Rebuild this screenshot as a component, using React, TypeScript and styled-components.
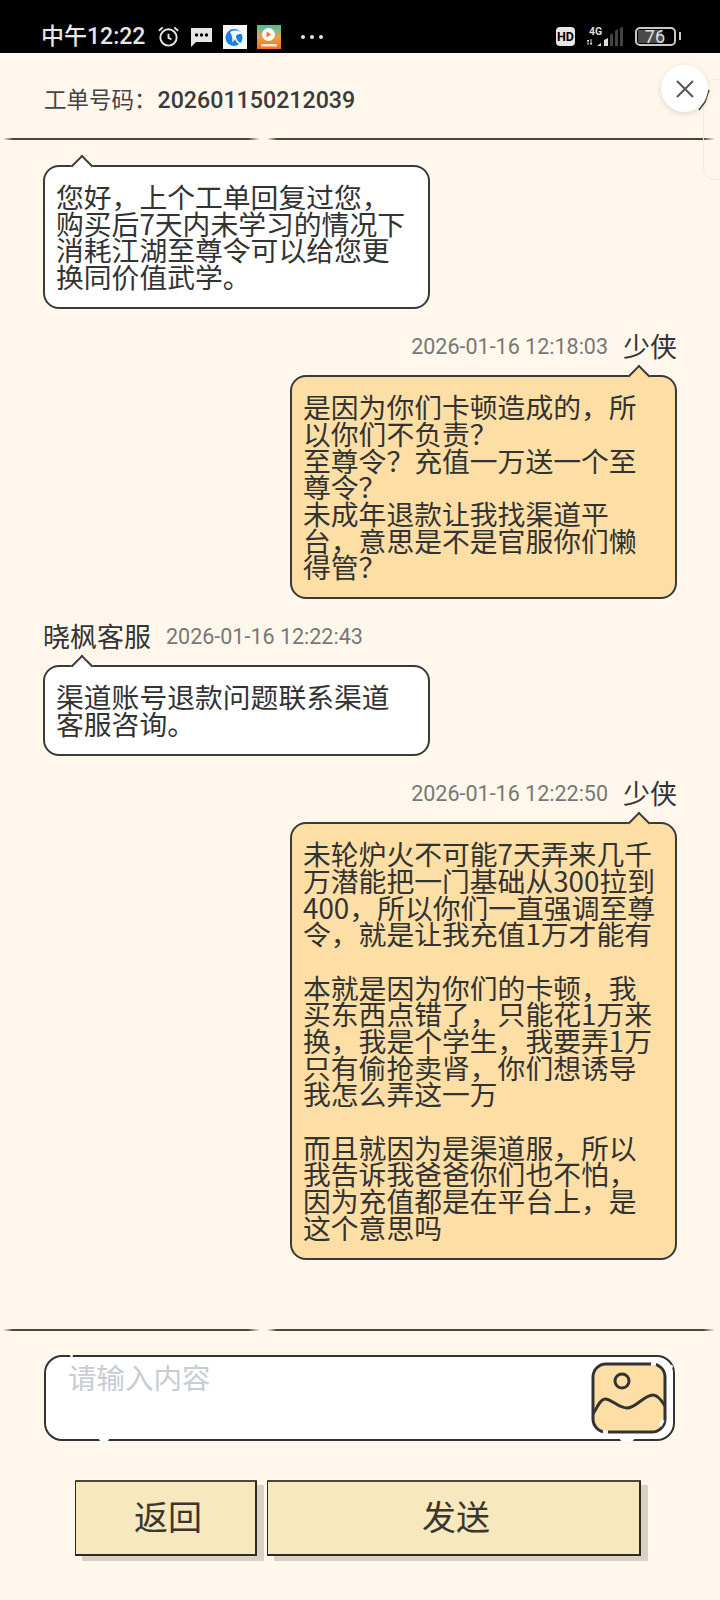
import styled, { createGlobalStyle } from 'styled-components';

const cjk = `"Noto Sans CJK SC", "Noto Sans", sans-serif`;
const latin = `Roboto, "Noto Sans CJK SC", sans-serif`;

const GlobalStyle = createGlobalStyle`
	html, body {
		margin: 0;
		padding: 0;
		background: #fff7ec;
	}
	* {
		box-sizing: border-box;
	}
`;

const Page = styled.div`
	position: relative;
	width: 720px;
	height: 1600px;
	overflow: hidden;
	background: #fff7ec;
	font-family: ${ cjk };
	color: #333;
`;

const StatusBar = styled.div`
	height: 53px;
	background: #000;
	display: flex;
	align-items: center;
	padding: 20px 0 0 41px;
	color: #e6e6e6;
`;

const Clock = styled.span`
	font-family: ${ latin };
	font-size: 23px;
	font-weight: 500;
	line-height: 1;
	width: 116px;
`;

const StatusIcons = styled.div`
	display: flex;
	align-items: center;
	gap: 10px;
`;

const StatusRight = styled.div`
	margin-left: auto;
	margin-right: 44px;
	display: flex;
	align-items: center;
	gap: 11px;
`;

const HdBadge = styled.span`
	width: 19px;
	height: 19px;
	background: #e6e6e6;
	color: #000;
	border-radius: 4px;
	font-family: ${ latin };
	font-size: 12.5px;
	font-weight: 700;
	line-height: 19px;
	text-align: center;
`;

const Battery = styled.span`
	width: 41px;
	height: 19px;
	border: 2px solid #c9c9c9;
	border-radius: 5px;
	display: block;
	position: relative;
	font-family: ${ latin };
	font-size: 18px;
	line-height: 16px;
	text-align: right;
	padding-right: 9px;
	color: #e0e0e0;

	&::before {
		content: '';
		position: absolute;
		left: 1px;
		top: 1px;
		bottom: 1px;
		width: 24px;
		background: #4a4a4a;
		z-index: 0;
	}

	&::after {
		content: '';
		position: absolute;
		right: -7px;
		top: 3px;
		width: 2px;
		height: 8px;
		background: #c9c9c9;
	}
`;

const BatteryLevel = styled.span`
	position: relative;
	z-index: 1;
`;

const Header = styled.div`
	height: 85px;
	padding: 5px 44px 0;
	display: flex;
	align-items: center;
	font-size: 22.5px;
	color: #444;
`;

const OrderNo = styled.span`
	margin: 3px 0 0 1px;
	font-family: ${ latin };
	font-size: 23.2px;
	font-weight: 500;
	color: #3a3a3a;
`;

const Divider = styled.div`
	display: flex;
	gap: 7px;
	padding: 0 5px 0 3px;
	height: 2px;
`;

const Stroke = styled.i<{ $grow: number }>`
	flex: ${ p => p.$grow };
	height: 2px;
	display: block;
	background: linear-gradient(90deg, #fff7ec 0, #4b463e 10px, #4b463e calc(100% - 12px), #fff7ec 100%);
`;

const Messages = styled.div`
	height: 1189px;
	padding: 25px 43px 0;
	display: flex;
	flex-direction: column;
`;

const Message = styled.div<{ $mine?: boolean }>`
	display: flex;
	flex-direction: column;
	align-items: ${ p => (p.$mine ? 'flex-end' : 'flex-start') };
	margin-bottom: 18px;
`;

const Meta = styled.div`
	height: 37px;
	margin-bottom: 11px;
	display: flex;
	align-items: center;
	gap: 15px;
`;

const Name = styled.span`
	font-size: 27px;
	color: #333;
`;

const Time = styled.span`
	font-family: ${ latin };
	font-size: 21.5px;
	color: #777;
	margin-top: 2px;
`;

const Bubble = styled.div<{ $mine?: boolean }>`
	position: relative;
	width: 387px;
	padding: 16px 11px 17.5px;
	border: 2px solid #3a3a3a;
	border-radius: 16px;
	background: ${ p => (p.$mine ? '#fddfa6' : '#fff') };
	font-size: 27.8px;
	line-height: 26.67px;
	color: #333;
	white-space: pre-line;

	&::before {
		content: '';
		position: absolute;
		top: -9px;
		${ p => (p.$mine ? 'right: 28px;' : 'left: 29px;') }
		width: 14px;
		height: 14px;
		background: ${ p => (p.$mine ? '#fddfa6' : '#fff') };
		border-top: 2px solid #3a3a3a;
		border-left: 2px solid #3a3a3a;
		transform: rotate(45deg);
	}
`;

const InputBox = styled.div`
	position: relative;
	margin: 24px 45px 0 44px;
	height: 86px;
	border: 2.5px solid #333;
	border-radius: 18px;
	background: #fff;
	display: flex;
	align-items: center;
	padding: 0 6px 0 22px;
`;

const Notch = styled.i<{ $left: number; $top: number; $width: number; $height: number }>`
	position: absolute;
	left: ${ p => p.$left }px;
	top: ${ p => p.$top }px;
	width: ${ p => p.$width }px;
	height: ${ p => p.$height }px;
	background: #fff;
	border-radius: 2px;
`;

const Field = styled.textarea`
	flex: 1;
	height: 100%;
	border: 0;
	outline: 0;
	resize: none;
	background: transparent;
	padding: 0;
	font-family: ${ cjk };
	font-size: 28.5px;
	line-height: 40px;

	&::placeholder {
		color: #c8ccd4;
	}
`;

const ImageButton = styled.button`
	width: 76px;
	height: 72px;
	padding: 0;
	border: 0;
	background: none;
	display: block;
`;

const Actions = styled.div`
	margin-top: 39px;
	padding: 0 0 0 75px;
	display: flex;
	gap: 10px;
`;

const ActionButton = styled.button<{ $width: number }>`
	width: ${ p => p.$width }px;
	height: 76px;
	border: 2px solid #2c2a24;
	border-left-width: 1.5px;
	border-bottom-width: 2.5px;
	border-top-color: #4c473a;
	border-radius: 1px;
	background: #f8e8bd;
	box-shadow: 7px 5px 0 #d9d1c4;
	font-family: ${ cjk };
	font-size: 34px;
	color: #3a3630;
	padding: 0 0 6px 5px;
`;

const CloseButton = styled.button`
	position: absolute;
	left: 661px;
	top: 65px;
	width: 47px;
	height: 47px;
	border: 0;
	border-radius: 50%;
	background: #fff;
	box-shadow: 0 2px 6px rgba(0, 0, 0, 0.12);
	padding: 0;
	display: flex;
	align-items: center;
	justify-content: center;
`;

const SidePanel = styled.div`
	position: absolute;
	left: 703px;
	top: 79px;
	width: 40px;
	height: 101px;
	border: 1px solid #f1eadf;
	border-radius: 12px;
`;

const SideMark = styled.svg`
	position: absolute;
	left: 695px;
	top: 88px;
`;

const messages = [
	{
		text: '您好，上个工单回复过您，\n购买后7天内未学习的情况下\n消耗江湖至尊令可以给您更\n换同价值武学。',
	},
	{
		mine: true,
		name: '少侠',
		time: '2026-01-16 12:18:03',
		text: '是因为你们卡顿造成的，所\n以你们不负责？\n至尊令？充值一万送一个至\n尊令？\n未成年退款让我找渠道平\n台，意思是不是官服你们懒\n得管？',
	},
	{
		name: '晓枫客服',
		time: '2026-01-16 12:22:43',
		text: '渠道账号退款问题联系渠道\n客服咨询。',
	},
	{
		mine: true,
		name: '少侠',
		time: '2026-01-16 12:22:50',
		text: '未轮炉火不可能7天弄来几千\n万潜能把一门基础从300拉到\n400，所以你们一直强调至尊\n令，就是让我充值1万才能有\n\n本就是因为你们的卡顿，我\n买东西点错了，只能花1万来\n换，我是个学生，我要弄1万\n只有偷抢卖肾，你们想诱导\n我怎么弄这一万\n\n而且就因为是渠道服，所以\n我告诉我爸爸你们也不怕，\n因为充值都是在平台上，是\n这个意思吗',
	},
];

const App = () => (
	<Page>
		<GlobalStyle />
		<StatusBar>
			<Clock>中午12:22</Clock>
			<StatusIcons>
				<svg width='23' height='23' viewBox='0 0 24 24' fill='none' stroke='#e6e6e6' strokeWidth='2'>
					<circle cx='12' cy='13' r='8.5' />
					<path d='M12 9v4.5l3 1.5M2 6l4-3.5M22 6l-4-3.5' />
				</svg>
				<svg width='23' height='22' viewBox='0 0 23 22'>
					<path d='M1 2h21v14H6l-5 5z' fill='#e6e6e6' />
					<circle cx='6.5' cy='9' r='1.7' />
					<circle cx='11.5' cy='9' r='1.7' />
					<circle cx='16.5' cy='9' r='1.7' />
				</svg>
				<svg width='24' height='24' viewBox='0 0 24 24'>
					<rect width='24' height='24' fill='#f4f6f8' />
					<circle cx='11' cy='12.5' r='8.5' fill='#1a7fe0' />
					<path d='M7 7c6-3 11-1 14 3-4-2-7-1-8 1 0 4 3 7 7 8-5 1-7-2-8-5-1 2-2 3-3 3 1-3 0-7-2-10z' fill='#f4f6f8' />
				</svg>
				<svg width='24' height='24' viewBox='0 0 24 24'>
					<defs>
						<linearGradient id='video' x1='0' y1='0' x2='0' y2='1'>
							<stop offset='0' stopColor='#3fc4a0' />
							<stop offset='0.5' stopColor='#e9a24b' />
							<stop offset='1' stopColor='#f26b21' />
						</linearGradient>
					</defs>
					<rect width='24' height='24' fill='url(#video)' />
					<circle cx='11.5' cy='9.5' r='6.5' fill='#fff' />
					<path d='M9.5 6.5l5 3-5 3z' fill='#ef7d2c' />
					<rect x='4' y='19' width='16' height='2.5' fill='#fde3c8' />
				</svg>
				<svg width='24' height='6' viewBox='0 0 24 6' fill='#e6e6e6' style={ { marginLeft: 9 } }>
					<circle cx='3' cy='3' r='2' />
					<circle cx='12' cy='3' r='2' />
					<circle cx='21' cy='3' r='2' />
				</svg>
			</StatusIcons>
			<StatusRight>
				<HdBadge>HD</HdBadge>
				<svg width='38' height='22' viewBox='0 0 38 22'>
					<text x='3' y='9' fontFamily='Roboto, sans-serif' fontSize='10.5' fontWeight='700' fill='#ddd'>4G</text>
					<path d='M2 19v-5M5 13v6M1 15l1-1 1 1M4 17l1 1 1-1' stroke='#ddd' strokeWidth='1' fill='none' />
					<path d='M11 20l4-3v3zM18 20v-6l4-2v8z' fill='#ddd' />
					<path d='M24 20V9l3-2v13zM29 20V5l3-2v17zM34 20V2l3-1v19z' fill='#444' />
				</svg>
				<Battery><BatteryLevel>76</BatteryLevel></Battery>
			</StatusRight>
		</StatusBar>

		<Header>
			工单号码：<OrderNo>202601150212039</OrderNo>
		</Header>
		<Divider>
			<Stroke $grow={ 257 } />
			<Stroke $grow={ 447 } />
		</Divider>

		<Messages>
			{ messages.map((item, index) => (
				<Message key={ index } $mine={ item.mine }>
					{ item.time && (
						<Meta>
							{ item.mine ? (
								<>
									<Time>{ item.time }</Time>
									<Name>{ item.name }</Name>
								</>
							) : (
								<>
									<Name>{ item.name }</Name>
									<Time>{ item.time }</Time>
								</>
							) }
						</Meta>
					) }
					<Bubble $mine={ item.mine }>{ item.text }</Bubble>
				</Message>
			)) }
		</Messages>

		<Divider>
			<Stroke $grow={ 257 } />
			<Stroke $grow={ 447 } />
		</Divider>

		<InputBox>
			<Notch $left={ 24 } $top={ -3 } $width={ 3 } $height={ 3 } />
			<Notch $left={ 53 } $top={ 80 } $width={ 10 } $height={ 4 } />
			<Notch $left={ 574 } $top={ 80 } $width={ 14 } $height={ 4 } />
			<Notch $left={ 622 } $top={ 8 } $width={ 5 } $height={ 3 } />
			<Field placeholder='请输入内容' />
			<ImageButton aria-label='upload image'>
				<svg width='76' height='72' viewBox='0 0 76 72'>
					<rect x='2' y='2' width='72' height='68' rx='13' fill='#fddfa6' stroke='#333' strokeWidth='3' />
					<circle cx='31' cy='19' r='7' fill='none' stroke='#333' strokeWidth='3' />
					<path d='M2 52c4-6 7-15 12-15 7 0 13 9 22 9 9 0 17-13 26-13 5 0 9 6 12 11' fill='none' stroke='#333' strokeWidth='3' />
					<path d='M60 2h5M72 58l-3 6M17 70h-5' fill='none' stroke='#fff' strokeWidth='3.5' />
				</svg>
			</ImageButton>
		</InputBox>

		<Actions>
			<ActionButton $width={ 182 }>返回</ActionButton>
			<ActionButton $width={ 374 }>发送</ActionButton>
		</Actions>

		<SidePanel />
		<SideMark width='16' height='24' viewBox='0 0 16 24'>
			<path d='M14 2l-4 12-6 8' fill='none' stroke='#444' strokeWidth='1.5' />
		</SideMark>
		<CloseButton aria-label='close'>
			<svg width='20' height='20' viewBox='0 0 20 20' stroke='#555' strokeWidth='2' fill='none'>
				<path d='M2 2l16 16M18 2L2 18' />
			</svg>
		</CloseButton>
	</Page>
);

export default App;
